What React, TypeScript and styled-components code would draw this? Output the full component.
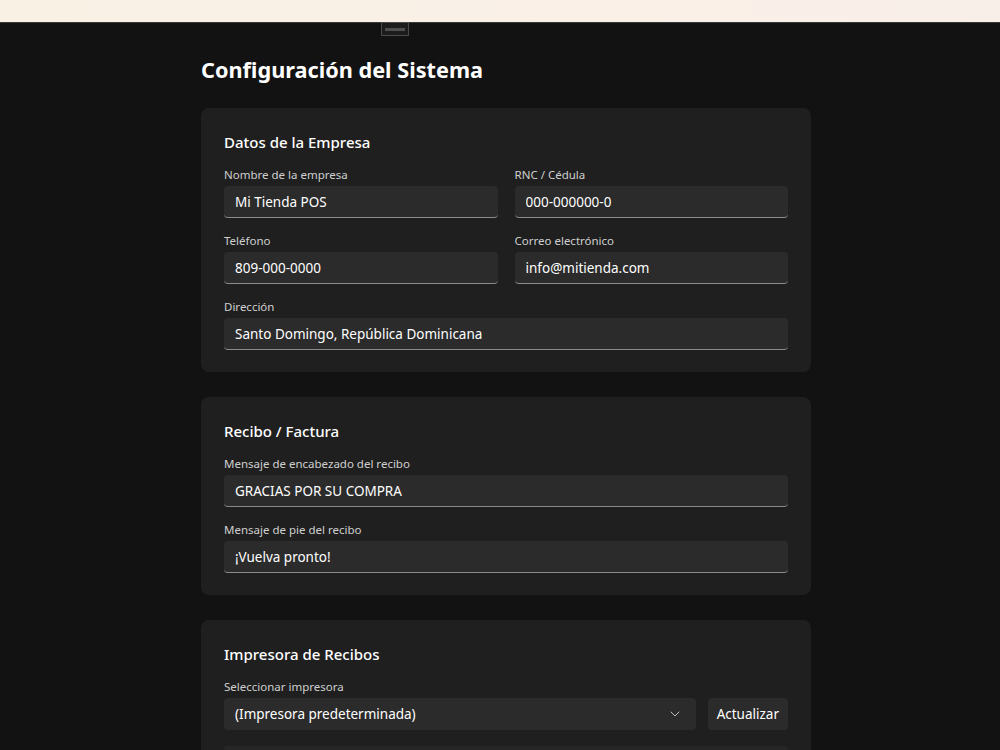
import React from 'react';
import styled, { createGlobalStyle } from 'styled-components';

const GlobalStyle = createGlobalStyle`
  html, body {
    margin: 0;
    padding: 0;
    background: #121212;
  }
  body {
    font-family: 'Noto Sans', 'Open Sans', sans-serif;
    color: #ffffff;
  }
`;

const Page = styled.div`
  min-height: 750px;
  background: #121212;
  position: relative;
`;

const TopBar = styled.div`
  height: 22px;
  background: linear-gradient(90deg, #faf1e5 0%, #f9efe9 100%);
  border-bottom: 1px solid #3a3a3a;
`;

const Handle = styled.div`
  position: absolute;
  top: 22px;
  left: 381px;
  width: 26px;
  height: 12px;
  border: 1px solid #4a4a4a;
  background: #1c1c1c;
  display: flex;
  align-items: center;
  justify-content: center;

  &::after {
    content: '';
    width: 20px;
    height: 3px;
    background: #4e4e4e;
  }
`;

const Content = styled.main`
  padding-left: 12px;
`;

const Column = styled.div`
  max-width: 610px;
  margin: 0 auto;
  padding-top: 32px;
  display: flex;
  flex-direction: column;
  gap: 25px;
`;

const Title = styled.h1`
  margin: 0 0 -2px;
  font-size: 21.7px;
  line-height: 30px;
  font-weight: 700;
  color: #ffffff;
`;

const Card = styled.section`
  background: #1f1f1f;
  border-radius: 8px;
  padding: 24px 23px 22px;
  display: flex;
  flex-direction: column;
`;

const CardTitle = styled.h2`
  margin: 0 0 15px;
  font-size: 15px;
  line-height: 20px;
  font-weight: 500;
  color: #ffffff;
`;

const Fields = styled.div`
  display: grid;
  grid-template-columns: 1fr 1fr;
  column-gap: 17px;
  row-gap: 15px;
`;

const Field = styled.div<{ $wide?: boolean }>`
  display: flex;
  flex-direction: column;
  grid-column: ${(p) => (p.$wide ? '1 / -1' : 'auto')};
`;

const Label = styled.label`
  font-size: 11.5px;
  line-height: 16px;
  color: #cfcfcf;
  margin-bottom: 3px;
`;

const Input = styled.input`
  box-sizing: border-box;
  height: 32px;
  width: 100%;
  padding: 0 11px;
  background: #2b2b2b;
  border: none;
  border-bottom: 1px solid #8a8a8a;
  border-radius: 4px;
  color: #ffffff;
  font-family: inherit;
  font-size: 13.5px;
  outline: none;
`;

const PrinterRow = styled.div`
  display: flex;
  gap: 12px;
`;

const Select = styled.div`
  flex: 1;
  box-sizing: border-box;
  height: 32px;
  padding: 0 16px 0 11px;
  background: #2b2b2b;
  border-radius: 4px;
  display: flex;
  align-items: center;
  justify-content: space-between;
  font-size: 13.5px;
  color: #ffffff;
`;

const Button = styled.button`
  height: 32px;
  padding: 0 9px;
  background: #2b2b2b;
  border: none;
  border-radius: 4px;
  color: #ffffff;
  font-family: inherit;
  font-size: 13.5px;
`;

const Box = styled.div`
  margin-top: 16px;
  height: 40px;
  background: #262626;
  border-radius: 4px;
`;

const Chevron = () => (
  <svg width="10" height="6" viewBox="0 0 10 6" fill="none">
    <path d="M1 1l4 4 4-4" stroke="#bdbdbd" strokeWidth="1" strokeLinecap="round" strokeLinejoin="round" />
  </svg>
);

const empresa = [
  { label: 'Nombre de la empresa', value: 'Mi Tienda POS' },
  { label: 'RNC / Cédula', value: '000-000000-0' },
  { label: 'Teléfono', value: '809-000-0000' },
  { label: 'Correo electrónico', value: 'info@mitienda.com' },
  { label: 'Dirección', value: 'Santo Domingo, República Dominicana', wide: true },
];

const recibo = [
  { label: 'Mensaje de encabezado del recibo', value: 'GRACIAS POR SU COMPRA', wide: true },
  { label: 'Mensaje de pie del recibo', value: '¡Vuelva pronto!', wide: true },
];

export default function App() {
  return (
    <>
      <GlobalStyle />
      <Page>
        <TopBar />
        <Handle />
        <Content>
          <Column>
            <Title>Configuración del Sistema</Title>

            <Card>
              <CardTitle>Datos de la Empresa</CardTitle>
              <Fields>
                {empresa.map((f) => (
                  <Field key={f.label} $wide={f.wide}>
                    <Label>{f.label}</Label>
                    <Input defaultValue={f.value} />
                  </Field>
                ))}
              </Fields>
            </Card>

            <Card>
              <CardTitle>Recibo / Factura</CardTitle>
              <Fields>
                {recibo.map((f) => (
                  <Field key={f.label} $wide={f.wide}>
                    <Label>{f.label}</Label>
                    <Input defaultValue={f.value} />
                  </Field>
                ))}
              </Fields>
            </Card>

            <Card>
              <CardTitle>Impresora de Recibos</CardTitle>
              <Field>
                <Label>Seleccionar impresora</Label>
                <PrinterRow>
                  <Select>
                    <span>(Impresora predeterminada)</span>
                    <Chevron />
                  </Select>
                  <Button>Actualizar</Button>
                </PrinterRow>
              </Field>
              <Box />
            </Card>
          </Column>
        </Content>
      </Page>
    </>
  );
}
